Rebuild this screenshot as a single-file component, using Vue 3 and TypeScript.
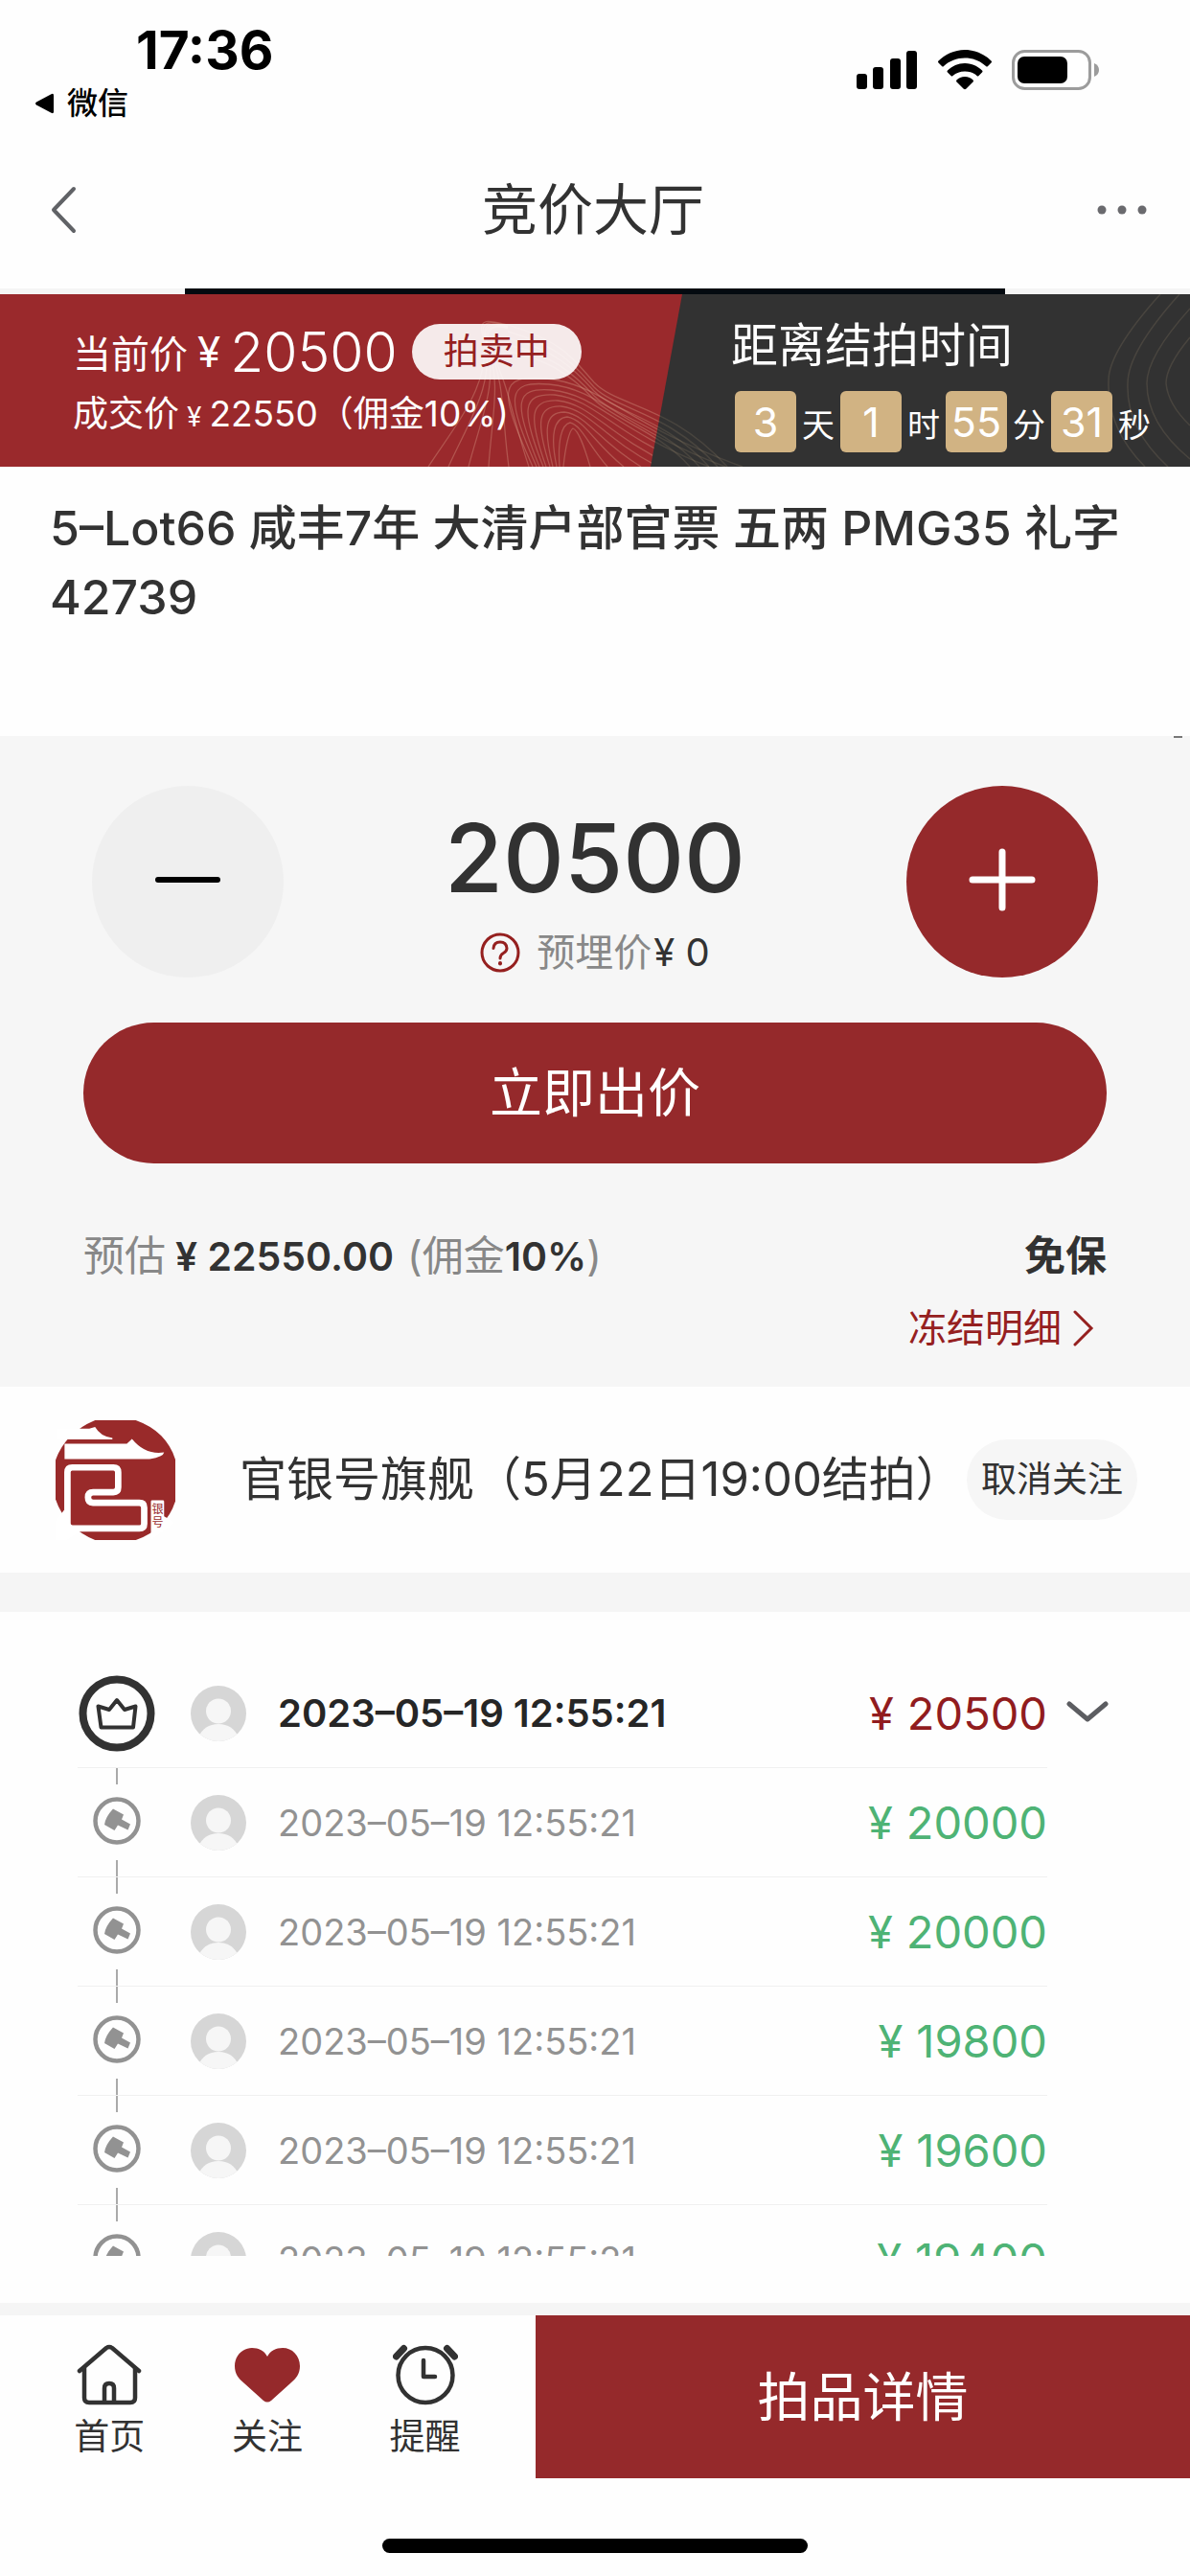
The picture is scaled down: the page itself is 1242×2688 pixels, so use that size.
<script setup lang="ts">
import { computed, ref } from 'vue'

interface Bid {
  time: string
  amount: number
}

interface TimePart {
  value: number
  unit: string
}

const step = 500
const currentPrice = 20500
const offer = ref(20500)

const countdown: TimePart[] = [
  { value: 3, unit: '天' },
  { value: 1, unit: '时' },
  { value: 55, unit: '分' },
  { value: 31, unit: '秒' },
]

const bids: Bid[] = [
  { time: '2023–05–19 12:55:21', amount: 20500 },
  { time: '2023–05–19 12:55:21', amount: 20000 },
  { time: '2023–05–19 12:55:21', amount: 20000 },
  { time: '2023–05–19 12:55:21', amount: 19800 },
  { time: '2023–05–19 12:55:21', amount: 19600 },
  { time: '2023–05–19 12:55:21', amount: 19400 },
]

const estimate = computed(() => (offer.value * 1.1).toFixed(2))

function lower() {
  offer.value = Math.max(currentPrice, offer.value - step)
}

function raise() {
  offer.value += step
}

// Contour lines of the banner, blended between an outer and an inner curve.
function blend(outer: number[], inner: number[], count: number): string[] {
  return Array.from({ length: count }, (_, i) => {
    const t = i / (count - 1)
    const p = outer.map((v, k) => Math.round(v + (inner[k] - v) * t))
    return `M${p[0]} ${p[1]}C${p.slice(2, 8).join(' ')}C${p.slice(8).join(' ')}`
  })
}

const hillLines = blend(
  [556, 180, 520, 100, 520, 84, 570, 88, 630, 94, 650, 135, 775, 180],
  [588, 180, 590, 160, 594, 142, 598, 140, 604, 142, 610, 160, 616, 180],
  10,
)
const slopeLines = blend(
  [447, 180, 480, 130, 515, 90, 503, 40, 500, 24, 512, 28, 530, 32],
  [552, 180, 535, 130, 530, 90, 512, 60, 504, 40, 512, 30, 530, 36],
  6,
)
const ridgeLines = blend(
  [530, 32, 590, 50, 600, 70, 620, 92, 645, 118, 700, 115, 759, 180],
  [530, 60, 570, 66, 600, 88, 620, 110, 640, 130, 690, 145, 720, 180],
  5,
)
</script>

<template>
  <div class="page">
    <header class="status">
      <div class="status-left">
        <span class="clock">17:36</span>
        <a class="back-app" href="#">
          <svg width="22" height="22" viewBox="0 0 22 22" aria-hidden="true">
            <path d="M20 2.500V19.500Q20 22 17.500 20.700L2 12.500Q0 11 2 9.500L17.500 1.300Q20 0 20 2.500Z" />
          </svg>
          微信
        </a>
      </div>
      <div class="status-icons">
        <svg width="64" height="42" viewBox="0 0 64 42" aria-hidden="true">
          <rect x="0" y="25" width="11" height="16" rx="3" />
          <rect x="17" y="18" width="11" height="23" rx="3" />
          <rect x="35" y="9" width="11" height="32" rx="3" />
          <rect x="52" y="1" width="11" height="40" rx="3" />
        </svg>
        <svg width="56" height="42" viewBox="0 0 56 42" aria-hidden="true">
          <path d="M28 0C39 0 49 5 55.500 11.500Q56.500 12.500 55.500 13.500L52 17Q51 18 50 17C44 11.500 36.500 8.500 28 8.500S12 11.500 6 17Q5 18 4 17L.5 13.500Q-.5 12.500 .5 11.500C7 5 17 0 28 0Z" />
          <path d="M28 14C35 14 41.500 17 46 21.500Q47 22.500 46 23.500L42.500 27Q41.500 28 40.500 27C37 24 33 22.500 28 22.500S19 24 15.500 27Q14.500 28 13.500 27L10 23.500Q9 22.500 10 21.500C14.500 17 21 14 28 14Z" />
          <path d="M28 28C31.500 28 34.500 29.500 36.500 31.500Q37.500 32.500 36.500 33.500L29.500 40.500Q28 42 26.500 40.500L19.500 33.500Q18.500 32.500 19.500 31.500C21.500 29.500 24.500 28 28 28Z" />
        </svg>
        <svg width="92" height="42" viewBox="0 0 92 42" aria-hidden="true">
          <rect x="1.500" y="1.500" width="80" height="39" rx="12" fill="#fff" stroke="#9c9c9c" stroke-width="3" />
          <rect x="6" y="7" width="52" height="28" rx="7" />
          <path d="M86 14Q91 16 91 21T86 28Z" fill="#9c9c9c" />
        </svg>
      </div>
    </header>

    <nav class="topbar">
      <button class="icon-button back" type="button" aria-label="返回">
        <svg width="30" height="50" viewBox="0 0 30 50" aria-hidden="true">
          <path d="M27 3 6 25 27 47" fill="none" stroke="#606266" stroke-width="4" stroke-linecap="round" stroke-linejoin="round" />
        </svg>
      </button>
      <h1>竞价大厅</h1>
      <button class="icon-button" type="button" aria-label="更多">
        <svg width="54" height="50" viewBox="0 0 54 50" fill="#6a6a6e" aria-hidden="true">
          <circle cx="6" cy="25" r="4.500" />
          <circle cx="27" cy="25" r="4.500" />
          <circle cx="48" cy="25" r="4.500" />
        </svg>
      </button>
    </nav>
    <div class="track"><div class="track-bar"></div></div>

    <section class="banner">
      <svg class="banner-art" viewBox="0 0 1242 180" preserveAspectRatio="none" aria-hidden="true">
        <rect width="1242" height="180" fill="#323232" />
        <path d="M0 0H712L679 180H0Z" fill="#9a292c" />
        <g fill="none" stroke="#e0a890" stroke-opacity=".34" stroke-width="1.300">
          <clipPath id="red-side"><path d="M0 0H712L679 180H0Z" /></clipPath>
          <g clip-path="url(#red-side)">
            <path v-for="d in slopeLines" :key="d" :d="d" />
            <path v-for="d in hillLines" :key="d" :d="d" />
            <path v-for="d in ridgeLines" :key="d" :d="d" />
          </g>
        </g>
        <g fill="none" stroke="#d8b88c" stroke-opacity=".14" stroke-width="1.500">
          <path d="M1211 0Q1157 60 1157 90Q1155 140 1195 180" />
          <path d="M1231 0Q1177 60 1177 93Q1175 140 1219 180" />
          <path d="M1242 15Q1197 65 1197 93Q1197 135 1242 172" />
          <path d="M1242 45Q1217 75 1217 93Q1219 115 1242 137" />
          <clipPath id="dark-side"><path d="M712 0H1242V180H679Z" /></clipPath>
          <g clip-path="url(#dark-side)">
            <path v-for="d in hillLines.slice(0, 3)" :key="d" :d="d" />
            <path v-for="d in ridgeLines" :key="d" :d="d" />
          </g>
        </g>
      </svg>
      <div class="prices">
        <div class="price-now">
          <span class="label">当前价</span>
          <span class="yen">¥</span>
          <span class="value">{{ currentPrice }}</span>
          <span class="pill">拍卖中</span>
        </div>
        <div class="price-deal">
          <span>成交价</span><span class="yen-small">¥</span><span>22550（佣金10%)</span>
        </div>
      </div>
      <div class="closing">
        <div class="closing-title">距离结拍时间</div>
        <div class="countdown">
          <template v-for="part in countdown" :key="part.unit">
            <span class="tile">{{ part.value }}</span>
            <span class="unit">{{ part.unit }}</span>
          </template>
        </div>
      </div>
    </section>

    <section class="lot">
      <h2>5–Lot66 咸丰7年 大清户部官票 五两 PMG35 礼字42739</h2>
    </section>

    <section class="bid-panel">
      <div class="stepper">
        <button class="round minus" type="button" aria-label="减价" @click="lower">
          <svg width="70" height="70" viewBox="0 0 70 70" aria-hidden="true">
            <path d="M4 33H66" stroke="#000" stroke-width="6" stroke-linecap="round" />
          </svg>
        </button>
        <div class="offer">
          <output class="offer-value">{{ offer }}</output>
          <div class="preset">
            <svg width="42" height="42" viewBox="0 0 42 42" fill="none" stroke="#95201f" stroke-width="3" stroke-linecap="round" aria-hidden="true">
              <circle cx="21" cy="21" r="19" />
              <path d="M14 16.500Q14.500 10 21 10T28 16.500Q28 19.500 24.500 21.500Q21 23.500 21 27" />
              <path d="M21 32V32.500" stroke-width="4" />
            </svg>
            <span class="preset-label">预埋价<b>¥ 0</b></span>
          </div>
        </div>
        <button class="round plus" type="button" aria-label="加价" @click="raise">
          <svg width="70" height="70" viewBox="0 0 70 70" aria-hidden="true">
            <path d="M4 33H66M35 4V62" stroke="#fff" stroke-width="7" stroke-linecap="round" />
          </svg>
        </button>
      </div>
      <button class="submit" type="button">立即出价</button>
      <div class="summary">
        <span class="estimate">预估<b class="amount">¥ {{ estimate }}</b><span class="fee">(佣金<b>10%</b>)</span></span>
        <b class="insured">免保</b>
      </div>
      <a class="frozen" href="#">
        冻结明细
        <svg width="22" height="38" viewBox="0 0 22 38" aria-hidden="true">
          <path d="M2 2 19 19 2 36" fill="none" stroke="#95201f" stroke-width="3" stroke-linecap="round" />
        </svg>
      </a>
    </section>

    <section class="shop">
      <svg class="logo" width="125" height="125" viewBox="55 66 373 373" aria-hidden="true">
        <path d="M178 66H305Q400 100 428 188V318Q400 405 305 439H178Q85 400 55 312V190Q85 105 178 66Z" fill="#992a2a" />
        <g fill="#fff">
          <path d="M60 126V92H160L178 87Q195 117 232 121V126Z" />
          <path d="M83 139H277L293 124Q335 175 393 166Q391 180 348 187H83Z" />
          <path d="M92 380V228Q92 213 107 213H235Q250 213 250 228V275Q250 290 235 290H172Q156 290 156 306T172 323H316Q331 323 331 338V388Q331 403 316 403H92Z" fill="none" stroke="#fff" stroke-width="20" />
          <path d="M55 380 82 345 102 412H130L90 439H55Z" />
          <path d="M352 319Q352 315 356 315H389Q393 315 393 319V365L428 385 352 439Z" />
        </g>
        <text x="373" y="356" class="logo-text">银</text>
        <text x="373" y="396" class="logo-text">号</text>
      </svg>
      <span class="shop-name">官银号旗舰（5月22日19:00结拍）</span>
      <button class="unfollow" type="button">取消关注</button>
    </section>

    <section class="history">
      <ol class="bids">
        <li v-for="(bid, i) in bids" :key="i" class="bid" :class="{ leading: i === 0 }">
          <span class="node">
            <svg v-if="i === 0" width="80" height="80" viewBox="0 0 80 80" fill="none" stroke="#323232" aria-hidden="true">
              <circle cx="40" cy="40" r="35.500" stroke-width="8" />
              <path d="M20.500 32.500 32 36 40 26 48 36 59.500 32.500 57 54.500H23.500Z" stroke-width="4" stroke-linejoin="round" />
            </svg>
            <svg v-else class="gavel" width="50" height="50" viewBox="0 0 50 50" aria-hidden="true">
              <circle cx="25" cy="25" r="22.500" fill="none" stroke="#929292" stroke-width="4.500" />
              <path d="M21 12.500 32 18.500 30 23.500 39 28.500 36.500 34.500 26 29.500 22.500 35 12 29Q13 21 21 12.500Z" fill="#929292" />
            </svg>
          </span>
          <svg class="avatar" width="58" height="58" viewBox="0 0 58 58" aria-hidden="true">
            <clipPath :id="`avatar-${i}`"><circle cx="29" cy="29" r="29" /></clipPath>
            <g :clip-path="`url(#avatar-${i})`">
              <rect width="58" height="58" fill="#d6d6d6" />
              <circle cx="29" cy="26.500" r="13" fill="#f6f6f6" />
              <path d="M8 54Q14 40 29 40T50 54V58H8Z" fill="#f6f6f6" />
            </g>
          </svg>
          <time>{{ bid.time }}</time>
          <span class="sum"><span class="sum-yen">¥</span>{{ bid.amount }}</span>
        </li>
      </ol>
      <button class="expand" type="button" aria-label="展开">
        <svg width="44" height="26" viewBox="0 0 44 26" aria-hidden="true">
          <path d="M3 4 22 20 41 4" fill="none" stroke="#5c5d61" stroke-width="5" stroke-linecap="round" stroke-linejoin="round" />
        </svg>
      </button>
    </section>

    <footer class="actions">
      <nav class="tabs">
        <a href="#" class="tab">
          <svg width="68" height="64" viewBox="0 0 68 64" fill="none" stroke="#323232" stroke-width="4.500" stroke-linecap="round" stroke-linejoin="round" aria-hidden="true">
            <path d="M3 28 31 4Q34 2 37 4L65 28" />
            <path d="M8 25V56Q8 61 13 61H56Q61 61 61 56V25" />
            <path d="M29 60V46Q29 41 34 41T39 46V60" />
          </svg>
          首页
        </a>
        <a href="#" class="tab">
          <svg width="68" height="64" viewBox="0 0 68 64" fill="#95292b" aria-hidden="true">
            <path d="M34 13C37 7 43 4 50 4C60 4 68 12 68 23C68 31 64 36 58 41L38 59Q34 62 30 59L10 41C4 36 0 31 0 23C0 12 8 4 18 4C25 4 31 7 34 13Z" />
          </svg>
          关注
        </a>
        <a href="#" class="tab">
          <svg width="68" height="64" viewBox="0 0 68 64" fill="none" stroke="#323232" stroke-width="4.500" stroke-linecap="round" stroke-linejoin="round" aria-hidden="true">
            <circle cx="34" cy="32.500" r="28.500" />
            <path d="M32 17V34H44" />
            <path d="M3.500 13 11.500 4.500M56.500 4.500 64.500 13" stroke-width="7" />
          </svg>
          提醒
        </a>
      </nav>
      <button class="details" type="button">拍品详情</button>
    </footer>
    <div class="home-indicator"></div>
  </div>
</template>

<style>
body {
  background: #fefefe;
}
</style>

<style scoped>
.page {
  font-family: Inter, "Noto Sans CJK SC", sans-serif;
  color: #323232;
  background: #fefefe;
}

button {
  margin: 0;
  padding: 0;
  border: 0;
  background: none;
  color: inherit;
  font: inherit;
}

a {
  color: inherit;
  text-decoration: none;
}

svg {
  display: block;
  flex: none;
}

h1,
h2,
ol {
  margin: 0;
  padding: 0;
  font-weight: 400;
}

.status {
  display: flex;
  justify-content: space-between;
  padding: 24px 94px 0 36px;
  height: 116px;
  color: #000;
}

.status-left {
  display: flex;
  flex-direction: column;
}

.clock {
  padding-left: 106px;
  font-size: 55px;
  line-height: 56px;
  font-weight: 700;
}

.back-app {
  display: flex;
  align-items: center;
  gap: 12px;
  font-size: 32px;
  line-height: 56px;
  font-weight: 500;
}

.status-icons {
  display: flex;
  align-items: flex-start;
  gap: 21px;
  padding-top: 28px;
}

.topbar {
  display: flex;
  align-items: center;
  justify-content: space-between;
  height: 158px;
  padding: 0 44px 3px 50px;
}

.topbar h1 {
  font-size: 58px;
  line-height: 80px;
}

.icon-button {
  display: flex;
  width: 54px;
}

.back {
  width: 44px;
}

.track {
  background: #f5f5f5;
}

.track-bar {
  width: 69%;
  height: 6px;
  margin: 0 auto;
  background: #040a10;
}

.banner {
  position: relative;
  display: grid;
  grid-template-columns: 763fr 479fr;
  height: 180px;
  color: #fff;
}

.banner-art {
  position: absolute;
  inset: 0;
  width: 100%;
  height: 100%;
}

.prices,
.closing {
  position: relative;
  white-space: nowrap;
}

.prices {
  padding: 30px 0 0 76px;
}

.price-now {
  display: flex;
  align-items: center;
  height: 60px;
}

.label {
  font-size: 40px;
}

.yen {
  padding: 0 10px;
  font-size: 44px;
}

.value {
  font-size: 57px;
  font-weight: 300;
}

.pill {
  margin-left: 15px;
  padding: 0 33px;
  border-radius: 29px;
  background: rgba(255, 255, 255, 0.9);
  color: #95201f;
  font-size: 37px;
  line-height: 58px;
}

.price-deal {
  margin-top: 8px;
  font-size: 37px;
  line-height: 54px;
}

.yen-small {
  padding: 0 8px;
  font-size: 28px;
}

.closing-title {
  padding-top: 19px;
  font-size: 49px;
  line-height: 70px;
}

.countdown {
  display: flex;
  align-items: center;
  margin-top: 12px;
  padding-left: 4px;
}

.tile {
  width: 64px;
  border-radius: 6px;
  background: #d1b383;
  font-size: 43px;
  line-height: 64px;
  text-align: center;
}

.unit {
  width: 46px;
  padding-top: 8px;
  font-size: 34px;
  line-height: 56px;
  text-align: center;
}

.lot {
  min-height: 253px;
  padding: 28px 52px 0;
}

.lot h2 {
  font-size: 50px;
  line-height: 72px;
  font-weight: 500;
}

.bid-panel {
  position: relative;
  padding: 52px 87px 30px;
  background: #f6f6f6;
}

.bid-panel::before {
  content: "";
  position: absolute;
  top: 0;
  right: 8px;
  width: 9px;
  height: 2px;
  background: #777;
}

.stepper {
  display: flex;
  justify-content: space-between;
  padding: 0 9px;
}

.round {
  display: flex;
  align-items: center;
  justify-content: center;
  width: 200px;
  height: 200px;
  border-radius: 50%;
}

.minus {
  background: #efefef;
}

.plus {
  background: #95292b;
}

.offer {
  display: flex;
  flex-direction: column;
  align-items: center;
}

.offer-value {
  font-size: 99px;
  line-height: 150px;
  font-weight: 550;
}

.preset {
  display: flex;
  align-items: center;
  gap: 17px;
  font-size: 40px;
  line-height: 48px;
}

.preset-label {
  color: #888;
}

.preset-label b {
  padding-left: 2px;
  color: #323232;
  font-weight: 400;
}

.submit {
  display: block;
  width: 100%;
  margin-top: 47px;
  border-radius: 74px;
  background: #95292b;
  color: #fff;
  font-size: 55px;
  line-height: 147px;
}

.summary {
  display: flex;
  justify-content: space-between;
  height: 72px;
  margin-top: 60px;
  color: #888;
  font-size: 43px;
  line-height: 72px;
}

.summary b {
  color: #323232;
  font-weight: 600;
}

.amount {
  padding: 0 14px 0 10px;
  font-size: 41px;
}

.fee b {
  font-size: 41px;
}

.summary .insured {
  font-weight: 700;
}

.frozen {
  display: flex;
  align-items: center;
  justify-content: flex-end;
  gap: 12px;
  padding: 9px 13px 0 0;
  color: #95201f;
  font-size: 40px;
  line-height: 62px;
}

.shop {
  display: flex;
  align-items: center;
  height: 194px;
  padding: 0 55px 0 58px;
}

.logo-text {
  font-size: 36px;
  font-family: "Noto Sans CJK SC", sans-serif;
  text-anchor: middle;
  fill: #992a2a;
}

.shop-name {
  flex: 1;
  margin-left: 67px;
  font-size: 49px;
  line-height: 72px;
  white-space: nowrap;
}

.unfollow {
  padding: 0 15px;
  border-radius: 42px;
  background: #f6f6f6;
  font-size: 37px;
  line-height: 84px;
}

.history {
  display: flex;
  align-items: flex-start;
  padding: 49px 85px 49px 81px;
  border-top: 41px solid #f5f5f5;
  border-bottom: 13px solid #f5f5f5;
}

.bids {
  flex: 1;
  height: 623px;
  overflow: hidden;
  list-style: none;
}

.bid {
  display: flex;
  align-items: center;
  height: 113px;
  border-bottom: 1px solid #f0f0f0;
  color: #929292;
  font-size: 38px;
}

.node {
  display: flex;
  flex-direction: column;
  align-items: center;
  justify-content: center;
  width: 82px;
  height: 100%;
}

.bid:not(.leading) .node {
  justify-content: space-between;
}

.bid:not(.leading) .node::before,
.bid:not(.leading) .node::after {
  content: "";
  width: 2px;
  height: 17px;
  background: #aaa;
}

.gavel {
  margin-bottom: 4px;
}

.avatar {
  margin: 0 33px 0 36px;
}

time {
  flex: 1;
  white-space: nowrap;
}

.leading time {
  color: #262626;
  font-size: 40px;
  font-weight: 600;
}

.sum {
  color: #4eb375;
  font-size: 47px;
}

.sum-yen {
  padding-right: 14px;
}

.leading .sum {
  color: #911c1e;
}

.expand {
  margin: 43px 0 0 20px;
}

.actions {
  display: flex;
  height: 170px;
}

.tabs {
  display: flex;
  flex: 1;
  padding: 0 33px 0 32px;
}

.tab {
  display: flex;
  flex: 1;
  flex-direction: column;
  align-items: center;
  padding-top: 30px;
  font-size: 37px;
  line-height: 66px;
}

.details {
  width: 55%;
  background: #95292b;
  color: #fff;
  font-size: 55px;
  line-height: 80px;
}

.home-indicator {
  width: 444px;
  height: 15px;
  margin: 63px auto 24px;
  border-radius: 8px;
  background: #000;
}
</style>
